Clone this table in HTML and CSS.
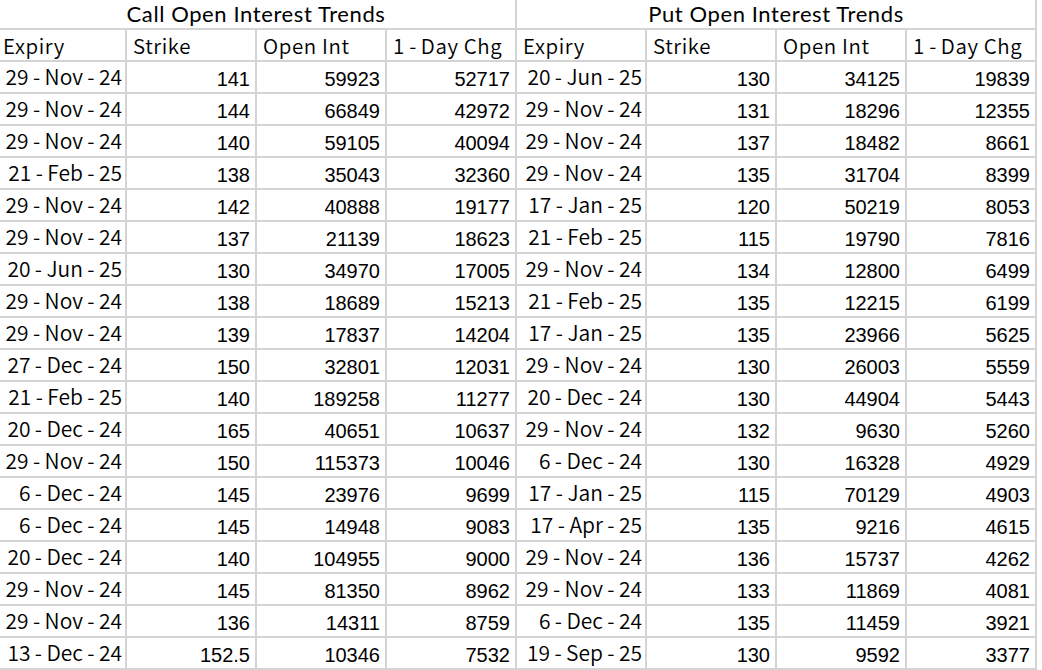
FILE: index.html
```html
<!DOCTYPE html>
<html>
<head>
<meta charset="utf-8">
<link rel="stylesheet" href="styles.css">
</head>
<body>
<div class="sheet">
  <div class="title span4">Call Open Interest Trends</div>
  <div class="title span4">Put Open Interest Trends</div>

  <div class="hd">Expiry</div><div class="hd">Strike</div><div class="hd">Open Int</div><div class="hd">1<span class="dh">-</span>Day Chg</div>
  <div class="hd">Expiry</div><div class="hd">Strike</div><div class="hd">Open Int</div><div class="hd">1<span class="dh">-</span>Day Chg</div>

  <div class="dt">29<span class="dh">-</span>Nov<span class="dh">-</span>24</div><div class="num">141</div><div class="num">59923</div><div class="num">52717</div>
  <div class="dt">20<span class="dh">-</span>Jun<span class="dh">-</span>25</div><div class="num">130</div><div class="num">34125</div><div class="num">19839</div>

  <div class="dt">29<span class="dh">-</span>Nov<span class="dh">-</span>24</div><div class="num">144</div><div class="num">66849</div><div class="num">42972</div>
  <div class="dt">29<span class="dh">-</span>Nov<span class="dh">-</span>24</div><div class="num">131</div><div class="num">18296</div><div class="num">12355</div>

  <div class="dt">29<span class="dh">-</span>Nov<span class="dh">-</span>24</div><div class="num">140</div><div class="num">59105</div><div class="num">40094</div>
  <div class="dt">29<span class="dh">-</span>Nov<span class="dh">-</span>24</div><div class="num">137</div><div class="num">18482</div><div class="num">8661</div>

  <div class="dt">21<span class="dh">-</span>Feb<span class="dh">-</span>25</div><div class="num">138</div><div class="num">35043</div><div class="num">32360</div>
  <div class="dt">29<span class="dh">-</span>Nov<span class="dh">-</span>24</div><div class="num">135</div><div class="num">31704</div><div class="num">8399</div>

  <div class="dt">29<span class="dh">-</span>Nov<span class="dh">-</span>24</div><div class="num">142</div><div class="num">40888</div><div class="num">19177</div>
  <div class="dt">17<span class="dh">-</span>Jan<span class="dh">-</span>25</div><div class="num">120</div><div class="num">50219</div><div class="num">8053</div>

  <div class="dt">29<span class="dh">-</span>Nov<span class="dh">-</span>24</div><div class="num">137</div><div class="num">21139</div><div class="num">18623</div>
  <div class="dt">21<span class="dh">-</span>Feb<span class="dh">-</span>25</div><div class="num">115</div><div class="num">19790</div><div class="num">7816</div>

  <div class="dt">20<span class="dh">-</span>Jun<span class="dh">-</span>25</div><div class="num">130</div><div class="num">34970</div><div class="num">17005</div>
  <div class="dt">29<span class="dh">-</span>Nov<span class="dh">-</span>24</div><div class="num">134</div><div class="num">12800</div><div class="num">6499</div>

  <div class="dt">29<span class="dh">-</span>Nov<span class="dh">-</span>24</div><div class="num">138</div><div class="num">18689</div><div class="num">15213</div>
  <div class="dt">21<span class="dh">-</span>Feb<span class="dh">-</span>25</div><div class="num">135</div><div class="num">12215</div><div class="num">6199</div>

  <div class="dt">29<span class="dh">-</span>Nov<span class="dh">-</span>24</div><div class="num">139</div><div class="num">17837</div><div class="num">14204</div>
  <div class="dt">17<span class="dh">-</span>Jan<span class="dh">-</span>25</div><div class="num">135</div><div class="num">23966</div><div class="num">5625</div>

  <div class="dt">27<span class="dh">-</span>Dec<span class="dh">-</span>24</div><div class="num">150</div><div class="num">32801</div><div class="num">12031</div>
  <div class="dt">29<span class="dh">-</span>Nov<span class="dh">-</span>24</div><div class="num">130</div><div class="num">26003</div><div class="num">5559</div>

  <div class="dt">21<span class="dh">-</span>Feb<span class="dh">-</span>25</div><div class="num">140</div><div class="num">189258</div><div class="num">11277</div>
  <div class="dt">20<span class="dh">-</span>Dec<span class="dh">-</span>24</div><div class="num">130</div><div class="num">44904</div><div class="num">5443</div>

  <div class="dt">20<span class="dh">-</span>Dec<span class="dh">-</span>24</div><div class="num">165</div><div class="num">40651</div><div class="num">10637</div>
  <div class="dt">29<span class="dh">-</span>Nov<span class="dh">-</span>24</div><div class="num">132</div><div class="num">9630</div><div class="num">5260</div>

  <div class="dt">29<span class="dh">-</span>Nov<span class="dh">-</span>24</div><div class="num">150</div><div class="num">115373</div><div class="num">10046</div>
  <div class="dt">6<span class="dh">-</span>Dec<span class="dh">-</span>24</div><div class="num">130</div><div class="num">16328</div><div class="num">4929</div>

  <div class="dt">6<span class="dh">-</span>Dec<span class="dh">-</span>24</div><div class="num">145</div><div class="num">23976</div><div class="num">9699</div>
  <div class="dt">17<span class="dh">-</span>Jan<span class="dh">-</span>25</div><div class="num">115</div><div class="num">70129</div><div class="num">4903</div>

  <div class="dt">6<span class="dh">-</span>Dec<span class="dh">-</span>24</div><div class="num">145</div><div class="num">14948</div><div class="num">9083</div>
  <div class="dt">17<span class="dh">-</span>Apr<span class="dh">-</span>25</div><div class="num">135</div><div class="num">9216</div><div class="num">4615</div>

  <div class="dt">20<span class="dh">-</span>Dec<span class="dh">-</span>24</div><div class="num">140</div><div class="num">104955</div><div class="num">9000</div>
  <div class="dt">29<span class="dh">-</span>Nov<span class="dh">-</span>24</div><div class="num">136</div><div class="num">15737</div><div class="num">4262</div>

  <div class="dt">29<span class="dh">-</span>Nov<span class="dh">-</span>24</div><div class="num">145</div><div class="num">81350</div><div class="num">8962</div>
  <div class="dt">29<span class="dh">-</span>Nov<span class="dh">-</span>24</div><div class="num">133</div><div class="num">11869</div><div class="num">4081</div>

  <div class="dt">29<span class="dh">-</span>Nov<span class="dh">-</span>24</div><div class="num">136</div><div class="num">14311</div><div class="num">8759</div>
  <div class="dt">6<span class="dh">-</span>Dec<span class="dh">-</span>24</div><div class="num">135</div><div class="num">11459</div><div class="num">3921</div>

  <div class="dt">13<span class="dh">-</span>Dec<span class="dh">-</span>24</div><div class="num">152.5</div><div class="num">10346</div><div class="num">7532</div>
  <div class="dt">19<span class="dh">-</span>Sep<span class="dh">-</span>25</div><div class="num">130</div><div class="num">9592</div><div class="num">3377</div>
</div>
</body>
</html>
```
FILE: styles.css
```css
html, body {
  margin: 0;
  padding: 0;
  background: #ffffff;
  overflow: hidden;
}
body {
  width: 1042px;
  height: 670px;
  color: #000;
}
.sheet {
  display: grid;
  grid-template-columns: repeat(8, 128px);
  grid-template-rows: 28px 30px repeat(19, 30px);
  gap: 2px;
  padding: 0 2px 2px 0;
  margin-left: -3px;
  width: max-content;
  background: #d4d4d4;
}
.sheet > div {
  background: #fff;
  white-space: nowrap;
  overflow: hidden;
}
.span4 {
  grid-column: span 4;
}
.title {
  font-family: Lato, "Noto Sans", sans-serif;
  font-size: 22px;
  letter-spacing: 0.6px;
  line-height: 28px;
  text-align: center;
}
.hd {
  font-family: "Noto Sans CJK SC", "Noto Sans", sans-serif;
  font-weight: 350;
  font-size: 20.5px;
  letter-spacing: 0.6px;
  line-height: 30px;
  padding-left: 6px;
}
.dt {
  font-family: "Noto Sans CJK SC", "Noto Sans", sans-serif;
  font-weight: 350;
  font-size: 21px;
  line-height: 29px;
  text-align: right;
  padding-right: 3px;
}
.dh {
  display: inline-block;
  width: 16px;
  letter-spacing: 0;
  text-align: center;
}
.num {
  font-family: "Liberation Sans", Arial, sans-serif;
  font-size: 20px;
  line-height: 30px;
  text-align: right;
  padding-right: 5px;
  padding-top: 2px;
  box-sizing: border-box;
}
```
